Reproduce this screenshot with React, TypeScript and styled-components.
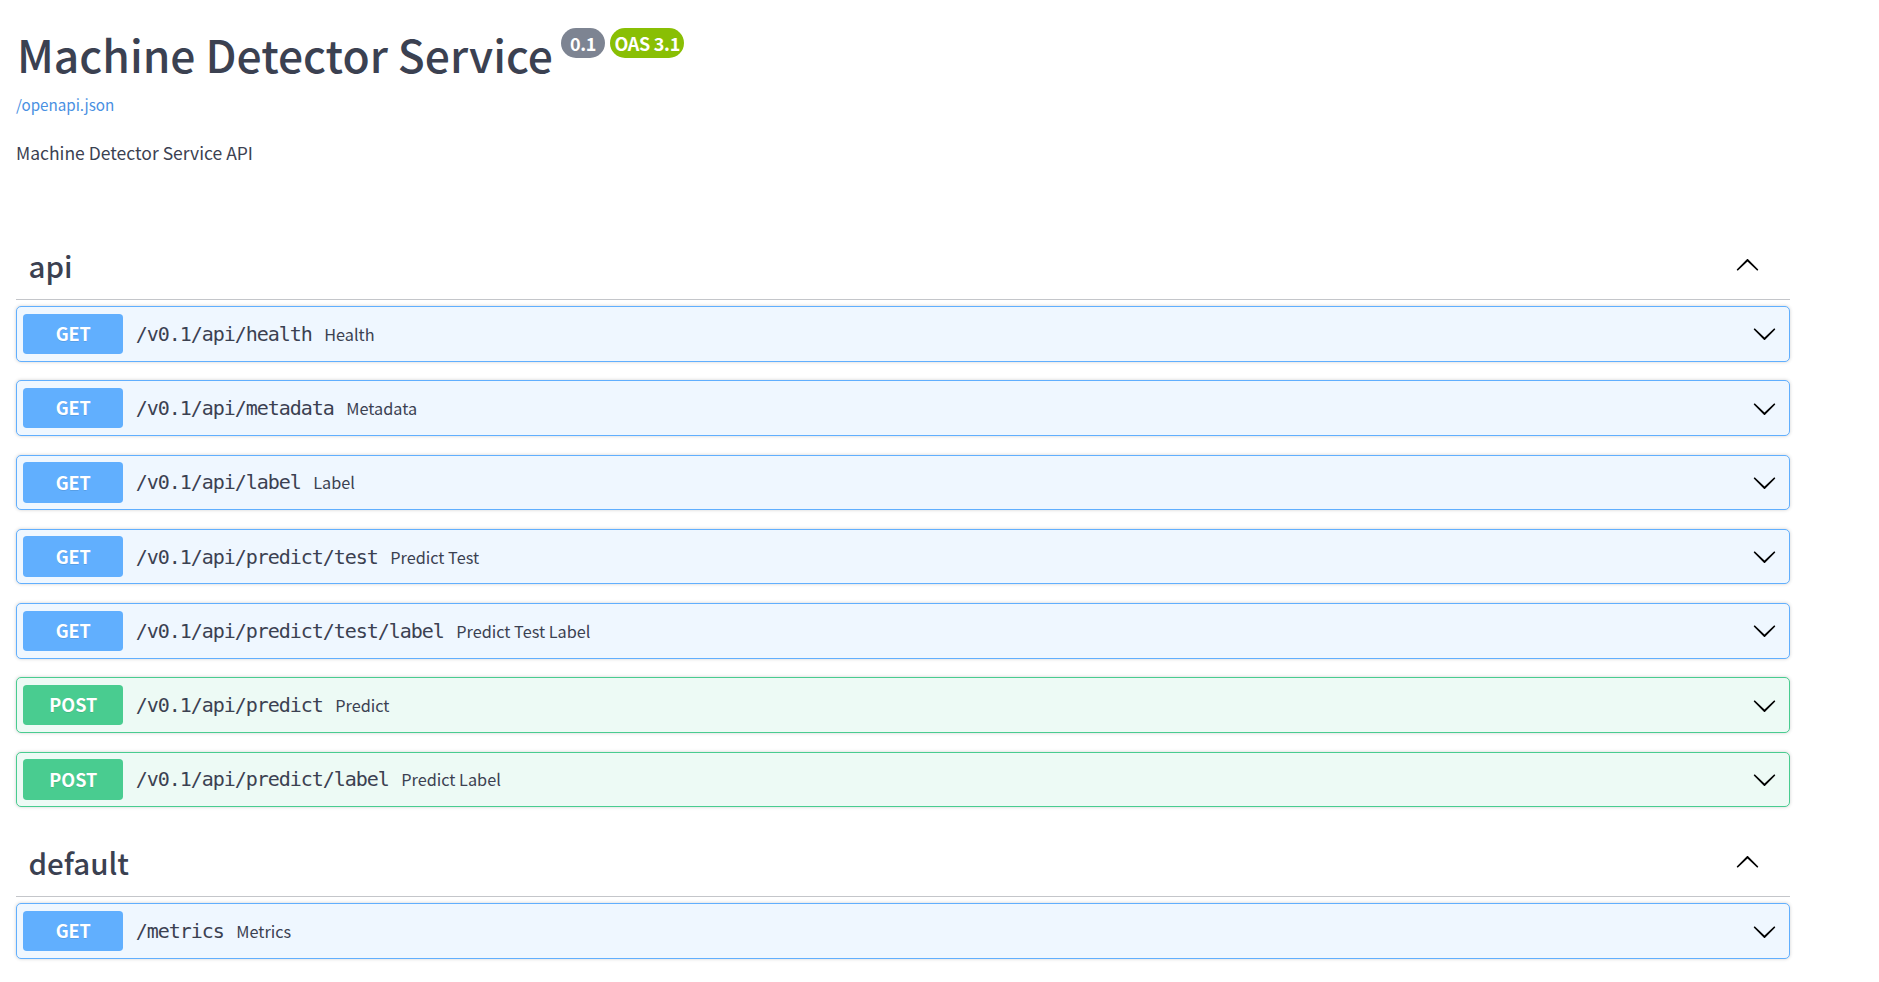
import React from "react";
import styled, { createGlobalStyle } from "styled-components";

const GlobalStyle = createGlobalStyle`
  html, body { margin: 0; padding: 0; background: #fff; }
  body {
    font-family: "Noto Sans CJK KR", "Noto Sans", sans-serif;
    color: #3b4151;
  }
  * { box-sizing: border-box; }
`;

const Page = styled.div`
  padding: 28px 0 0 16px;
  width: 1790px;
`;

const Info = styled.header`
  display: flex;
  flex-direction: column;
  align-items: flex-start;
`;

const TitleRow = styled.div`
  display: flex;
  align-items: flex-start;
`;

const Title = styled.h2`
  margin: 3px 0 0 1px;
  font-size: 44.4px;
  line-height: 45px;
  font-weight: 500;
  color: #3b4151;
`;

const Badges = styled.div`
  display: flex;
  gap: 5px;
  margin-left: 8px;
`;

const Badge = styled.span<{ $tone: string }>`
  min-width: 44px;
  text-align: center;
  background: ${(p) => p.$tone};
  color: #fff;
  border-radius: 57px;
  padding: 2.5px 4.5px;
  font-size: 18px;
  line-height: 25px;
  font-weight: 700;
  letter-spacing: -0.3px;
`;

const SpecLink = styled.a`
  margin-top: 18px;
  font-size: 15.2px;
  line-height: 20px;
  color: #4990e2;
  text-decoration: none;
`;

const Description = styled.p`
  margin: 27px 0 0;
  font-size: 17.5px;
  line-height: 24px;
  color: #3b4151;
`;

const Sections = styled.main`
  margin-top: 70.5px;
  width: 1774px;
  display: flex;
  flex-direction: column;
`;

const Section = styled.section`
  display: flex;
  flex-direction: column;
  & + & {
    margin-top: 7px;
  }
`;

const TagHeader = styled.div`
  height: 64px;
  display: flex;
  align-items: center;
  padding: 0 30px 4px 12.5px;
  border-bottom: 1px solid rgba(59, 65, 81, 0.3);
`;

const TagName = styled.h3`
  margin: 0;
  flex: 1;
  font-size: 29.5px;
  font-weight: 500;
  color: #3b4151;
`;

const OpList = styled.div`
  margin-top: 6.5px;
  display: flex;
  flex-direction: column;
`;

const METHOD_COLORS: Record<string, { main: string; bg: string }> = {
  GET: { main: "#61affe", bg: "#eff7ff" },
  POST: { main: "#49cc90", bg: "#edfaf5" },
};

const OpRow = styled.div<{ $method: string }>`
  height: 55.5px;
  margin-bottom: 18.75px;
  display: flex;
  align-items: center;
  padding: 0 6.25px;
  border: 1px solid ${(p) => METHOD_COLORS[p.$method].main};
  background: ${(p) => METHOD_COLORS[p.$method].bg};
  border-radius: 5px;
  box-shadow: 0 0 3.75px rgba(0, 0, 0, 0.19);
`;

const Method = styled.span<{ $method: string }>`
  min-width: 100px;
  padding: 7.5px 0;
  font-size: 18px;
  line-height: 25.5px;
  font-weight: 700;
  color: #fff;
  text-align: center;
  border-radius: 3.75px;
  background: ${(p) => METHOD_COLORS[p.$method].main};
  text-shadow: 0 1px 0 rgba(0, 0, 0, 0.1);
`;

const Path = styled.span`
  padding: 0 12.5px;
  font-family: "DejaVu Sans Mono", "Liberation Mono", monospace;
  font-size: 20px;
  letter-spacing: -1.04px;
  color: #3b4151;
`;

const Summary = styled.span`
  flex: 1;
  font-size: 16.25px;
  color: #3b4151;
`;

const ArrowBox = styled.svg<{ $flip?: boolean }>`
  width: 25px;
  height: 25px;
  flex: none;
  transform: ${(p) => (p.$flip ? "rotate(180deg)" : "none")};
`;

const RowArrow = styled(ArrowBox)`
  margin-right: 6px;
`;

const ARROW =
  "M17.418 6.109c.272-.268.709-.268.979 0s.271.701 0 .969l-7.908 7.83c-.27.268-.707.268-.979 0l-7.908-7.83c-.27-.268-.27-.701 0-.969.271-.268.709-.268.979 0L10 13.25l7.418-7.141z";

type Op = { method: string; path: string; summary: string };

const sections: { name: string; ops: Op[] }[] = [
  {
    name: "api",
    ops: [
      { method: "GET", path: "/v0.1/api/health", summary: "Health" },
      { method: "GET", path: "/v0.1/api/metadata", summary: "Metadata" },
      { method: "GET", path: "/v0.1/api/label", summary: "Label" },
      { method: "GET", path: "/v0.1/api/predict/test", summary: "Predict Test" },
      { method: "GET", path: "/v0.1/api/predict/test/label", summary: "Predict Test Label" },
      { method: "POST", path: "/v0.1/api/predict", summary: "Predict" },
      { method: "POST", path: "/v0.1/api/predict/label", summary: "Predict Label" },
    ],
  },
  {
    name: "default",
    ops: [{ method: "GET", path: "/metrics", summary: "Metrics" }],
  },
];

export default function App() {
  return (
    <>
      <GlobalStyle />
      <Page>
        <Info>
          <TitleRow>
            <Title>Machine Detector Service</Title>
            <Badges>
              <Badge $tone="#7d8492">0.1</Badge>
              <Badge $tone="#89bf04">OAS 3.1</Badge>
            </Badges>
          </TitleRow>
          <SpecLink href="#">/openapi.json</SpecLink>
          <Description>Machine Detector Service API</Description>
        </Info>
        <Sections>
          {sections.map((s) => (
            <Section key={s.name}>
              <TagHeader>
                <TagName>{s.name}</TagName>
                <ArrowBox $flip viewBox="0 0 20 20">
                  <path d={ARROW} fill="#000" />
                </ArrowBox>
              </TagHeader>
              <OpList>
                {s.ops.map((op) => (
                  <OpRow key={op.path + op.method} $method={op.method}>
                    <Method $method={op.method}>{op.method}</Method>
                    <Path>{op.path}</Path>
                    <Summary>{op.summary}</Summary>
                    <RowArrow viewBox="0 0 20 20">
                      <path d={ARROW} fill="#000" />
                    </RowArrow>
                  </OpRow>
                ))}
              </OpList>
            </Section>
          ))}
        </Sections>
      </Page>
    </>
  );
}
